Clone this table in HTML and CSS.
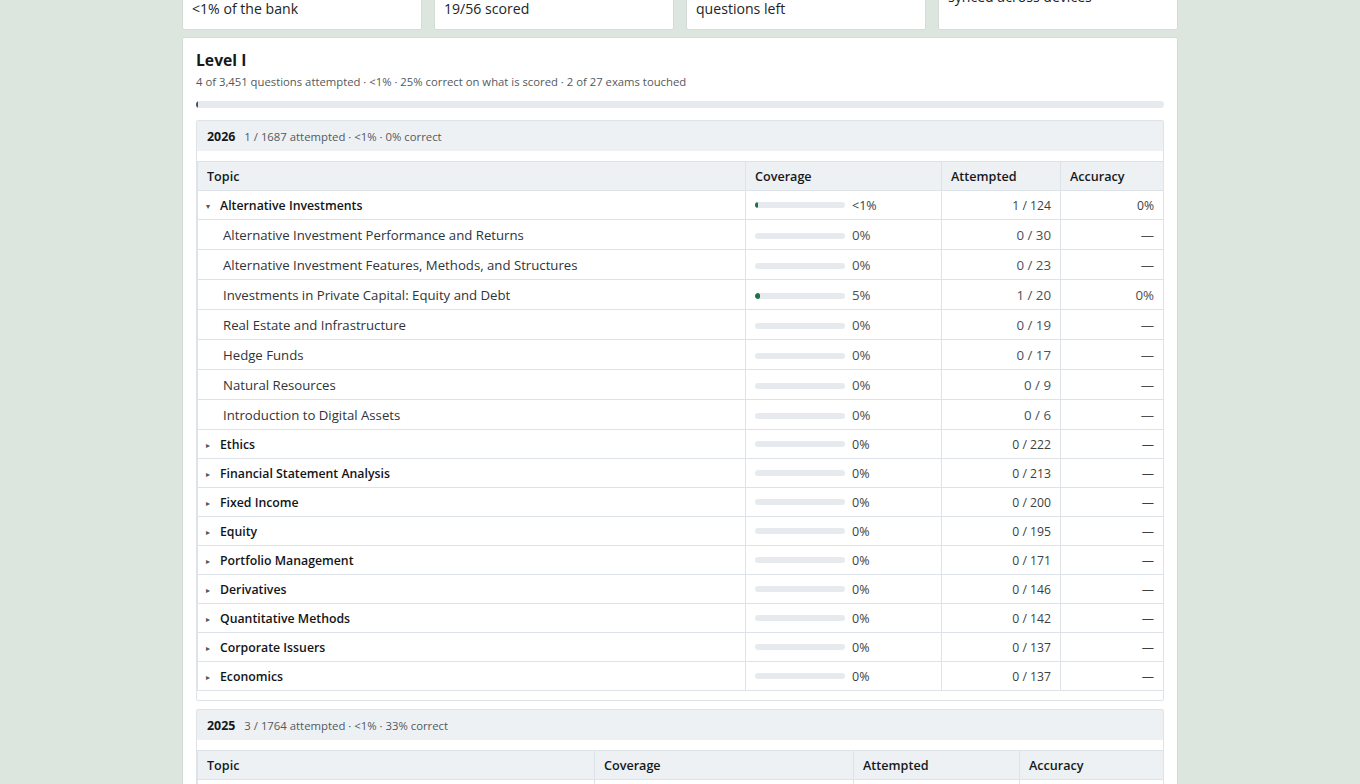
FILE: index.html
```html
<!DOCTYPE html>
<html lang="en">
<head>
<meta charset="utf-8">
<title>Progress</title>
<link rel="stylesheet" href="styles.css">
</head>
<body>
<main class="page">
  <section class="stats">
    <div class="stat">
      <div class="stat-label">Attempted</div>
      <div class="stat-value">4</div>
      <div class="stat-sub">&lt;1% of the bank</div>
    </div>
    <div class="stat">
      <div class="stat-label">Accuracy</div>
      <div class="stat-value">34%</div>
      <div class="stat-sub">19/56 scored</div>
    </div>
    <div class="stat">
      <div class="stat-label">Remaining</div>
      <div class="stat-value">3,447</div>
      <div class="stat-sub">questions left</div>
    </div>
    <div class="stat">
      <div class="stat-label">Storage</div>
      <div class="stat-value stat-value-small">Cloud</div>
      <div class="stat-sub">synced across devices</div>
    </div>
  </section>

  <section class="panel">
    <h2 class="panel-title">Level I</h2>
    <p class="panel-sub">4 of 3,451 questions attempted · &lt;1% · 25% correct on what is scored · 2 of 27 exams touched</p>
    <div class="track track-main"><div class="fill" style="width:0.2%"></div></div>

    <div class="year">
      <div class="year-head"><span class="year-num">2026</span><span class="year-meta">1 / 1687 attempted · &lt;1% · 0% correct</span></div>
      <div class="year-body">
        <table class="topics t2026">
          <colgroup><col class="c-topic"><col class="c-cov"><col class="c-att"><col class="c-acc"></colgroup>
          <thead>
            <tr><th>Topic</th><th>Coverage</th><th>Attempted</th><th>Accuracy</th></tr>
          </thead>
          <tbody>
            <tr class="grp"><td><span class="caret">▾</span>Alternative Investments</td><td><div class="cov"><div class="track"><div class="fill" style="width:3px"></div></div><span>&lt;1%</span></div></td><td class="num">1 / 124</td><td class="num">0%</td></tr>
            <tr class="sub"><td>Alternative Investment Performance and Returns</td><td><div class="cov"><div class="track"></div><span>0%</span></div></td><td class="num">0 / 30</td><td class="num">—</td></tr>
            <tr class="sub"><td>Alternative Investment Features, Methods, and Structures</td><td><div class="cov"><div class="track"></div><span>0%</span></div></td><td class="num">0 / 23</td><td class="num">—</td></tr>
            <tr class="sub"><td>Investments in Private Capital: Equity and Debt</td><td><div class="cov"><div class="track"><div class="fill" style="width:5%"></div></div><span>5%</span></div></td><td class="num">1 / 20</td><td class="num">0%</td></tr>
            <tr class="sub"><td>Real Estate and Infrastructure</td><td><div class="cov"><div class="track"></div><span>0%</span></div></td><td class="num">0 / 19</td><td class="num">—</td></tr>
            <tr class="sub"><td>Hedge Funds</td><td><div class="cov"><div class="track"></div><span>0%</span></div></td><td class="num">0 / 17</td><td class="num">—</td></tr>
            <tr class="sub"><td>Natural Resources</td><td><div class="cov"><div class="track"></div><span>0%</span></div></td><td class="num">0 / 9</td><td class="num">—</td></tr>
            <tr class="sub"><td>Introduction to Digital Assets</td><td><div class="cov"><div class="track"></div><span>0%</span></div></td><td class="num">0 / 6</td><td class="num">—</td></tr>
            <tr class="grp"><td><span class="caret">▸</span>Ethics</td><td><div class="cov"><div class="track"></div><span>0%</span></div></td><td class="num">0 / 222</td><td class="num">—</td></tr>
            <tr class="grp"><td><span class="caret">▸</span>Financial Statement Analysis</td><td><div class="cov"><div class="track"></div><span>0%</span></div></td><td class="num">0 / 213</td><td class="num">—</td></tr>
            <tr class="grp"><td><span class="caret">▸</span>Fixed Income</td><td><div class="cov"><div class="track"></div><span>0%</span></div></td><td class="num">0 / 200</td><td class="num">—</td></tr>
            <tr class="grp"><td><span class="caret">▸</span>Equity</td><td><div class="cov"><div class="track"></div><span>0%</span></div></td><td class="num">0 / 195</td><td class="num">—</td></tr>
            <tr class="grp"><td><span class="caret">▸</span>Portfolio Management</td><td><div class="cov"><div class="track"></div><span>0%</span></div></td><td class="num">0 / 171</td><td class="num">—</td></tr>
            <tr class="grp"><td><span class="caret">▸</span>Derivatives</td><td><div class="cov"><div class="track"></div><span>0%</span></div></td><td class="num">0 / 146</td><td class="num">—</td></tr>
            <tr class="grp"><td><span class="caret">▸</span>Quantitative Methods</td><td><div class="cov"><div class="track"></div><span>0%</span></div></td><td class="num">0 / 142</td><td class="num">—</td></tr>
            <tr class="grp"><td><span class="caret">▸</span>Corporate Issuers</td><td><div class="cov"><div class="track"></div><span>0%</span></div></td><td class="num">0 / 137</td><td class="num">—</td></tr>
            <tr class="grp"><td><span class="caret">▸</span>Economics</td><td><div class="cov"><div class="track"></div><span>0%</span></div></td><td class="num">0 / 137</td><td class="num">—</td></tr>
          </tbody>
        </table>
      </div>
    </div>

    <div class="year">
      <div class="year-head"><span class="year-num">2025</span><span class="year-meta">3 / 1764 attempted · &lt;1% · 33% correct</span></div>
      <div class="year-body">
        <table class="topics t2025">
          <colgroup><col class="c-topic"><col class="c-cov"><col class="c-att"><col class="c-acc"></colgroup>
          <thead>
            <tr><th>Topic</th><th>Coverage</th><th>Attempted</th><th>Accuracy</th></tr>
          </thead>
          <tbody>
            <tr class="grp"><td><span class="caret">▸</span>Ethical and Professional Standards</td><td><div class="cov"><div class="track"><div class="fill" style="width:2%"></div></div><span>2%</span></div></td><td class="num">3 / 190</td><td class="num">33%</td></tr>
            <tr class="grp"><td><span class="caret">▸</span>Quantitative Methods</td><td><div class="cov"><div class="track"></div><span>0%</span></div></td><td class="num">0 / 160</td><td class="num">—</td></tr>
          </tbody>
        </table>
      </div>
    </div>
  </section>
</main>
</body>
</html>
```

FILE: styles.css
```css
* { box-sizing: border-box; }

html, body {
  margin: 0;
  padding: 0;
}

body {
  background: #dde6de;
  font-family: "Open Sans", "Noto Sans", "Liberation Sans", sans-serif;
  color: #1d2226;
  overflow: hidden;
}

.page {
  width: 996px;
  margin: 0 auto;
}

/* stat cards (page is scrolled so only bottoms show) */
.stats {
  display: grid;
  grid-template-columns: repeat(4, 1fr);
  gap: 12px;
  margin-top: -71px;
}

.stat {
  background: #ffffff;
  border: 1px solid #d3ddd5;
  border-radius: 2px;
  padding: 10px 9px 9px;
}

.stat-label {
  font-size: 12px;
  line-height: 18px;
  color: #666;
  margin-bottom: 4px;
}

.stat-value {
  font-size: 26px;
  line-height: 36px;
  font-weight: 700;
}

.stat-value-small {
  font-size: 16px;
  line-height: 24px;
}

.stat-sub {
  font-size: 14.1px;
  line-height: 22px;
  color: #202427;
}

/* main panel */
.panel {
  margin-top: 7px;
  background: #ffffff;
  border: 1px solid #d3ddd5;
  border-radius: 2px;
  padding: 11px 13px 14px;
}

.panel-title {
  margin: 0 0 2px;
  font-size: 15.7px;
  line-height: 22px;
  font-weight: 700;
  color: #15191c;
}

.panel-sub {
  margin: 0;
  font-size: 11.3px;
  line-height: 18px;
  color: #53595e;
}

.track {
  height: 6px;
  background: #e6eaee;
  border-radius: 4px;
  overflow: hidden;
}

.track-main {
  height: 7px;
  margin-top: 10px;
}

.fill {
  height: 100%;
  background: #1e7346;
  border-radius: 4px;
}

.track-main .fill {
  background: #3d5670;
  min-width: 2px;
}

/* year sections */
.year {
  margin-top: 12px;
  border: 1px solid #dde3e8;
  border-radius: 2px;
}

.year + .year {
  margin-top: 8px;
}

.year-head {
  background: #eef1f4;
  height: 30px;
  display: flex;
  align-items: center;
  padding: 0 10px;
  gap: 9px;
}

.year-num {
  font-size: 12.4px;
  font-weight: 700;
  color: #15191c;
}

.year-meta {
  font-size: 11.35px;
  color: #53595e;
}

.year-body {
  padding: 10px 0 9px;
}

.topics {
  width: 100%;
  border-collapse: collapse;
  table-layout: fixed;
  border: 1px solid #dde3e8;
}

.t2026 .c-topic { width: 548px; }
.t2026 .c-cov { width: 196px; }
.t2026 .c-att { width: 119px; }
.t2026 .c-acc { width: 103px; }

.t2025 .c-topic { width: 397px; }
.t2025 .c-cov { width: 259px; }
.t2025 .c-att { width: 166px; }
.t2025 .c-acc { width: 144px; }

.topics th {
  background: #eef1f4;
  text-align: left;
  font-size: 12.6px;
  font-weight: 600;
  color: #15191c;
  height: 29px;
  padding: 0 9px;
  border: 1px solid #dde3e8;
}

.topics td {
  border: 1px solid #dde3e8;
  padding: 0 9px;
  font-size: 12.3px;
  color: #1d2226;
}

.grp td {
  height: 29px;
}

.grp td:first-child {
  font-weight: 600;
  color: #121518;
}

.sub td {
  height: 30px;
  font-size: 13.2px;
  color: #2f3438;
}

.sub td:first-child {
  padding-left: 25px;
  font-weight: 400;
}

.caret {
  display: inline-block;
  width: 14px;
  margin-left: -1px;
  font-size: 8px;
  color: #555;
  vertical-align: 1px;
  font-weight: 400;
}

.cov {
  display: flex;
  align-items: center;
  gap: 7px;
}

.cov .track {
  width: 90px;
  flex: none;
}

.cov span {
  font-size: 12.5px;
  color: #3a3f44;
}

.sub .cov span {
  font-size: 13.3px;
  color: #4a5055;
}

.sub .cov .track {
  margin-top: 3px;
}

.num {
  text-align: right;
}

.topics td.num {
  font-size: 12.2px;
  color: #3a3f44;
}

.sub td.num {
  font-size: 13.3px;
  color: #4a5055;
}
```
